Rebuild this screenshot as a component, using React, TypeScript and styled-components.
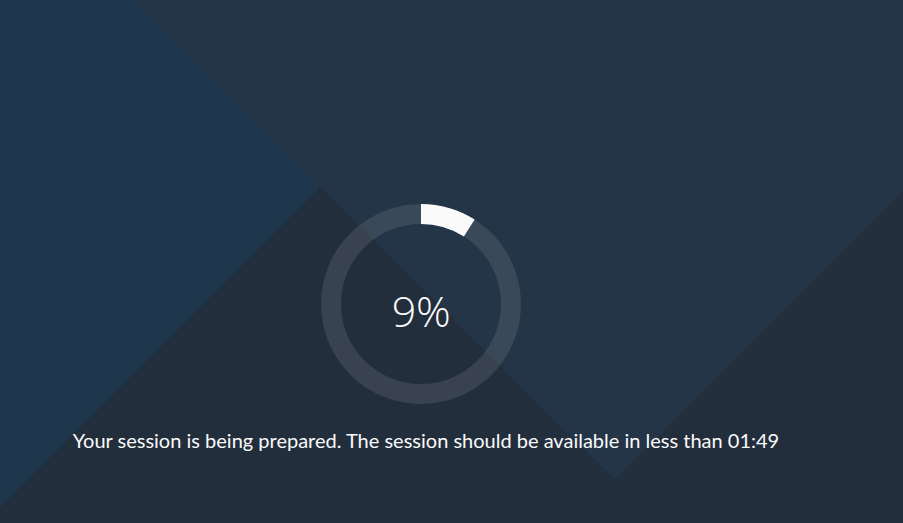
import React from 'react';
import styled, { createGlobalStyle } from 'styled-components';

const GlobalStyle = createGlobalStyle`
  html, body {
    margin: 0;
    padding: 0;
    background: #232e3d;
  }
  * {
    box-sizing: border-box;
  }
`;

const Page = styled.main`
  position: relative;
  overflow: hidden;
  width: 100vw;
  height: 100vh;
  min-height: 523px;
  background-color: #232e3d;
  font-family: Lato, 'Open Sans', sans-serif;
  color: #fafafa;
`;

// decorative diamonds behind the content
const Shape = styled.div<{ $tone: string; $points: string }>`
  position: absolute;
  inset: 0;
  background: ${(p) => p.$tone};
  clip-path: polygon(${(p) => p.$points});
`;

const Content = styled.section`
  position: relative;
  display: flex;
  flex-direction: column;
  align-items: center;
  width: 852px;
  padding-top: 204px;
`;

const Ring = styled.div`
  position: relative;
  width: 200px;
  height: 200px;
  margin-left: -10px;
`;

const RingSvg = styled.svg`
  display: block;
  transform: rotate(-90deg);
`;

const Percent = styled.div`
  position: absolute;
  inset: 0;
  display: flex;
  align-items: center;
  justify-content: center;
  padding-top: 12px;
  font-family: 'Open Sans', sans-serif;
  font-weight: 300;
  font-size: 43px;
  letter-spacing: -0.5px;
`;

const Message = styled.p`
  margin: 22px 0 0;
  font-size: 20px;
  line-height: 28px;
  white-space: nowrap;
`;

function ProgressRing({ value }: { value: number }) {
  const r = 90;
  const c = 2 * Math.PI * r;
  return (
    <Ring>
      <RingSvg width="200" height="200" viewBox="0 0 200 200">
        <circle cx="100" cy="100" r={r} fill="none" stroke="rgba(255,255,255,0.1)" strokeWidth="20" />
        <circle
          cx="100"
          cy="100"
          r={r}
          fill="none"
          stroke="#fafafa"
          strokeWidth="20"
          strokeDasharray={`${(c * value) / 100} ${c}`}
        />
      </RingSvg>
      <Percent>{value}%</Percent>
    </Ring>
  );
}

export default function App() {
  return (
    <Page>
      <GlobalStyle />
      <Shape $tone="#1e374d" $points="0 0, 133px 0, 320px 187px, 0 507px" />
      <Shape $tone="#233546" $points="133px 0, 903px 0, 903px 192px, 615px 480px" />
      <Content>
        <ProgressRing value={9} />
        <Message>Your session is being prepared. The session should be available in less than 01:49</Message>
      </Content>
    </Page>
  );
}
